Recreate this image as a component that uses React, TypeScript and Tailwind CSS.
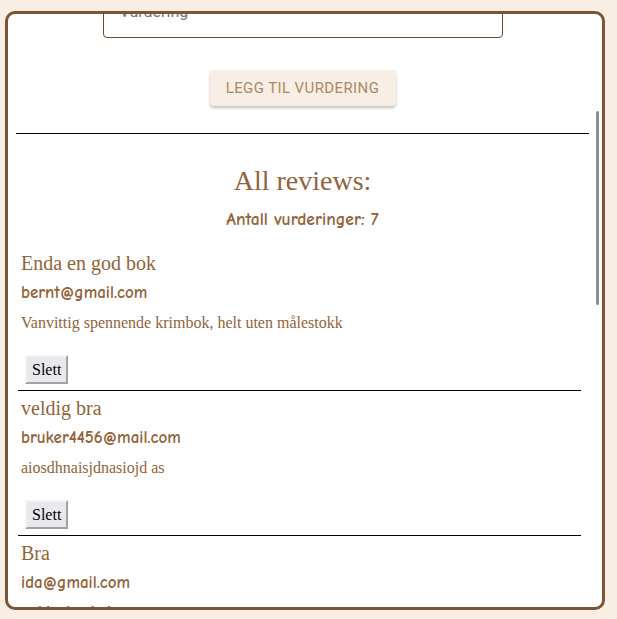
const reviews = [
  { title: "Enda en god bok", email: "bernt@gmail.com", text: "Vanvittig spennende krimbok, helt uten målestokk" },
  { title: "veldig bra", email: "bruker4456@mail.com", text: "aiosdhnaisjdnasiojd as" },
  { title: "Bra", email: "ida@gmail.com", text: "Veldig bra bok" },
];

const serif = "font-['Liberation_Serif','Times_New_Roman',serif]";
const comic = "font-['Comic_Sans_MS','Comic_Neue',cursive]";

export default function App() {
  return (
    <div className="h-[619px] bg-[#f8eee3] pt-[11px] pl-[5px]">
      <div className="relative h-[599px] w-[600px] overflow-hidden rounded-[10px] border-[3px] border-[#7b5534] bg-white">
        {/* scrolled content */}
        <div className="-mt-[36px] pr-[5px]">
          <div className="mx-auto h-[60px] w-[400px] rounded-[4px] border border-[#6b4a2e] px-[16px] pt-[21px] font-['Roboto',sans-serif] text-[16px] leading-[24px] text-[#777]">
            Vurdering
          </div>
          <button className="mx-auto mt-[32px] block h-[36px] w-[186px] rounded-[4px] bg-[#f7efe5] font-['Roboto',sans-serif] text-[15px] tracking-[0.4px] text-[#b08862] uppercase shadow-[0_2px_3px_rgba(0,0,0,0.25)]">
            Legg til vurdering
          </button>
          <hr className="mx-[8px] mt-[27px] border-t border-black" />
          <h2 className={`${serif} mt-[31px] text-center text-[28px] leading-[32px] text-[#93643c]`}>All reviews:</h2>
          <p className={`${comic} mt-[12px] text-center text-[17.5px] leading-[20px] font-semibold text-[#93643c]`}>
            Antall vurderinger: 7
          </p>
          <div className="mt-[22px] pl-[13px]">
            {reviews.map((r, i) => (
              <div key={i}>
                <h3 className={`${serif} ${i === 0 ? "mt-0" : "mt-[5px]"} text-[20px] leading-[24px] text-[#93643c]`}>{r.title}</h3>
                <p className={`${comic} mt-[8px] text-[17px] leading-[20px] font-semibold text-[#93643c]`}>{r.email}</p>
                <p className={`${serif} mt-[11px] text-[16px] leading-[18px] text-[#93643c]`}>{r.text}</p>
                <button className={`${serif} mt-[23px] ml-[4px] block h-[29px] border-2 border-t-[#f4f4f4] border-l-[#f4f4f4] border-r-[#a3a3a3] border-b-[#a3a3a3] bg-[#e9e9ed] px-[5px] text-[16px] text-black`}>
                  Slett
                </button>
                <hr className="mt-[6px] mr-[16px] -ml-[3px] border-t border-black" />
              </div>
            ))}
          </div>
        </div>
        <div className="absolute top-[97px] right-[3px] h-[194px] w-[3px] rounded-full bg-[#8e8e8e]" />
      </div>
    </div>
  );
}
